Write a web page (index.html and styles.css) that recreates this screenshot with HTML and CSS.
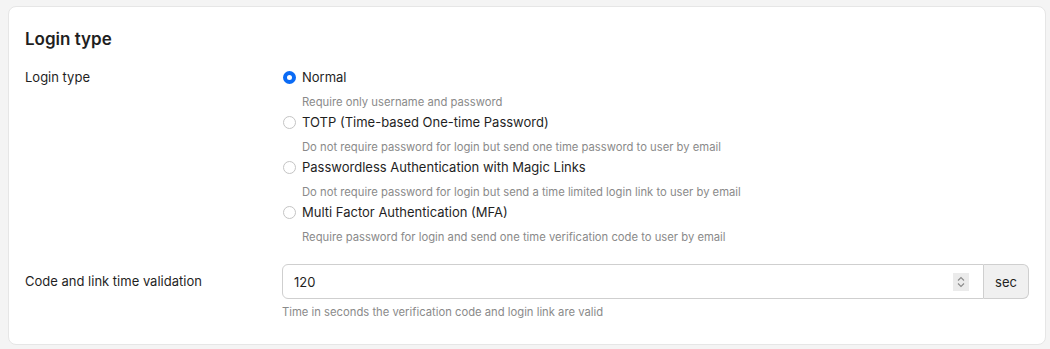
FILE: index.html
```html
<!DOCTYPE html>
<html>
    <head>
        <meta charset="UTF-8">
        <title>Login type</title>
        <link rel="stylesheet" href="styles.css">
    </head>
    <body>
        <div class="card">
            <h2 class="card-title">Login type</h2>

            <!-- login type -->
            <div class="row">
                <div class="row-label">Login type</div>
                <div class="row-field">
                    <label class="opt">
                        <span class="radio on"></span>
                        <span class="opt-name">Normal</span>
                    </label>
                    <div class="opt-desc">Require only username and password</div>
                    <label class="opt">
                        <span class="radio"></span>
                        <span class="opt-name">TOTP (Time-based One-time Password)</span>
                    </label>
                    <div class="opt-desc">Do not require password for login but send one time password to user by email</div>
                    <label class="opt">
                        <span class="radio"></span>
                        <span class="opt-name">Passwordless Authentication with Magic Links</span>
                    </label>
                    <div class="opt-desc">Do not require password for login but send a time limited login link to user by email</div>
                    <label class="opt">
                        <span class="radio"></span>
                        <span class="opt-name">Multi Factor Authentication (MFA)</span>
                    </label>
                    <div class="opt-desc">Require password for login and send one time verification code to user by email</div>
                </div>
            </div>

            <!-- time validation -->
            <div class="row row-time">
                <div class="row-label">Code and link time validation</div>
                <div class="row-field">
                    <div class="group">
                        <div class="input">
                            <span>120</span>
                            <span class="spin">
                                <svg width="10" height="14" viewBox="0 0 10 14">
                                    <path d="M2 5.5 L5 2.5 L8 5.5" fill="none" stroke="#8a8a8a" stroke-width="1.1"/>
                                    <path d="M2 8.5 L5 11.5 L8 8.5" fill="none" stroke="#8a8a8a" stroke-width="1.1"/>
                                </svg>
                            </span>
                        </div>
                        <div class="addon">sec</div>
                    </div>
                    <div class="help">Time in seconds the verification code and login link are valid</div>
                </div>
            </div>
        </div>
    </body>
</html>
```

FILE: styles.css
```css
body{
    margin: 0;
    background: #f4f4f4;
    font-family: Inter, "Liberation Sans", sans-serif;
    color: #1f1f1f;
    font-size: 13px;
}
/* 카드 */
.card{
    margin: 6px 4px 4px 8px;
    background: #fff;
    border: 1px solid #e6e6e6;
    border-radius: 8px;
    padding: 21px 16px 23px 16px;
}
.card-title{
    margin: 0 0 17px;
    font-size: 17px;
    font-weight: 600;
    line-height: 22px;
}
/* 줄 */
.row{
    display: flex;
}
.row-label{
    width: 257px;
    flex: none;
    line-height: 21px;
}
.row-field{
    flex: 1;
}
/* 라디오 */
.opt{
    display: flex;
    align-items: center;
    line-height: 21px;
}
.radio{
    width: 11px;
    height: 11px;
    border: 1px solid #c4c4c4;
    border-radius: 50%;
    margin: 0 6px 0 1px;
    box-sizing: content-box;
}
.radio.on{
    width: 5px;
    height: 5px;
    border: 4px solid #0b6bf5;
}
.opt-desc{
    padding-left: 20px;
    font-size: 11.25px;
    color: #8a8a8a;
    line-height: 17px;
    margin: 6px 0 1px;
}
/* 시간 입력 */
.row-time{
    margin-top: 17px;
    align-items: flex-start;
}
.row-time .row-label{
    line-height: 35px;
}
.group{
    display: flex;
    height: 35px;
}
.input{
    flex: 1;
    display: flex;
    align-items: center;
    justify-content: space-between;
    border: 1px solid #cfcfcf;
    border-radius: 6px 0 0 6px;
    padding: 0 14px 0 11px;
}
.spin{
    width: 16px;
    height: 18px;
    background: #ebebeb;
    display: flex;
    align-items: center;
    justify-content: center;
}
.addon{
    width: 44px;
    display: flex;
    align-items: center;
    justify-content: center;
    border: 1px solid #cfcfcf;
    border-left: none;
    border-radius: 0 6px 6px 0;
    background: #f0f0f0;
}
.help{
    margin-top: 5px;
    font-size: 11.25px;
    color: #8a8a8a;
    line-height: 17px;
}
```
